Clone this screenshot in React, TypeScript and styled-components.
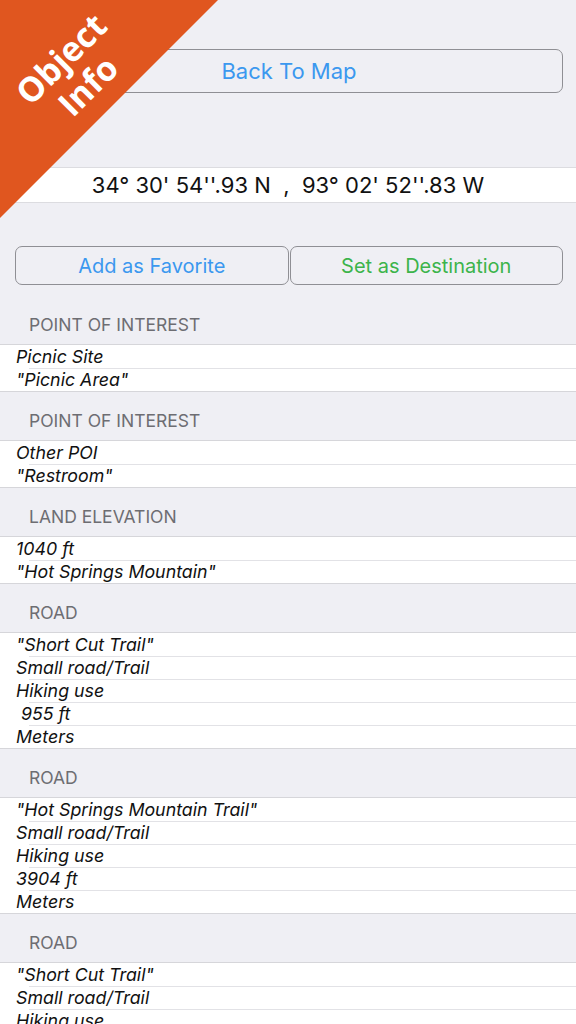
import React from 'react';
import styled, { createGlobalStyle } from 'styled-components';

const GlobalStyle = createGlobalStyle`
  html, body {
    margin: 0;
    padding: 0;
    background: #efeff4;
  }
  body {
    font-family: Inter, "Noto Sans", "Liberation Sans", sans-serif;
    -webkit-font-smoothing: antialiased;
  }
`;

const Screen = styled.div`
  position: relative;
  width: 576px;
  height: 1024px;
  background: #efeff4;
  overflow: hidden;
`;

const TopBar = styled.div`
  padding: 49px 13px 0 15px;
`;

const OutlineButton = styled.button<{ $tone?: 'blue' | 'green'; $h?: number }>`
  display: flex;
  align-items: center;
  justify-content: center;
  width: 100%;
  height: ${(p) => p.$h || 44}px;
  margin: 0;
  padding: 0;
  background: transparent;
  border: 1px solid #8f8f94;
  border-radius: 7px;
  font-family: inherit;
  font-size: ${(p) => (p.$h ? 20 : 22)}px;
  color: ${(p) => (p.$tone === 'green' ? '#3cb44b' : '#3b98ef')};
  cursor: pointer;
`;

const CoordRow = styled.div`
  margin-top: 74px;
  height: 34px;
  display: flex;
  align-items: center;
  justify-content: center;
  background: #fff;
  border-top: 1px solid #dcdce0;
  border-bottom: 1px solid #dcdce0;
  font-size: 22px;
  color: #111;
  white-space: pre;
`;

const ActionRow = styled.div`
  display: grid;
  grid-template-columns: 1fr 1fr;
  gap: 1px;
  padding: 43px 13px 10px 15px;
`;

const SectionHeader = styled.div`
  height: 50px;
  display: flex;
  align-items: flex-end;
  padding: 0 0 10px 29px;
  box-sizing: border-box;
  font-size: 17.5px;
  line-height: 20px;
  color: #6d6d72;
`;

const List = styled.div`
  background: #fff;
  box-shadow: 0 -1px 0 #d6d6da, 0 1px 0 #d6d6da;
`;

const Row = styled.div`
  position: relative;
  height: 23px;
  line-height: 23px;
  padding-left: 16px;
  font-size: 17.8px;
  font-style: italic;
  color: #111;
  white-space: pre;

  & + &::before {
    content: '';
    position: absolute;
    top: 0;
    left: 29px;
    right: 0;
    height: 1px;
    background: #e2e2e6;
  }
`;

const Ribbon = styled.div`
  position: absolute;
  top: 0;
  left: 0;
  width: 218px;
  height: 218px;
  background: #e0561f;
  clip-path: polygon(0 0, 100% 0, 0 100%);
  pointer-events: none;
`;

const RibbonText = styled.div`
  position: absolute;
  left: 74px;
  top: 72px;
  transform: translate(-50%, -50%) rotate(-45deg);
  font-family: "Open Sans", "DejaVu Sans", sans-serif;
  font-weight: 700;
  font-size: 34px;
  line-height: 38px;
  color: #fff;
  text-align: center;
  white-space: nowrap;
`;

const sections: { title: string; rows: string[] }[] = [
  { title: 'POINT OF INTEREST', rows: ['Picnic Site', '"Picnic Area"'] },
  { title: 'POINT OF INTEREST', rows: ['Other POI', '"Restroom"'] },
  { title: 'LAND ELEVATION', rows: ['1040 ft', '"Hot Springs Mountain"'] },
  {
    title: 'ROAD',
    rows: ['"Short Cut Trail"', 'Small road/Trail', 'Hiking use', ' 955 ft', 'Meters'],
  },
  {
    title: 'ROAD',
    rows: ['"Hot Springs Mountain Trail"', 'Small road/Trail', 'Hiking use', '3904 ft', 'Meters'],
  },
  {
    title: 'ROAD',
    rows: ['"Short Cut Trail"', 'Small road/Trail', 'Hiking use', ' 955 ft', 'Meters'],
  },
];

const App = () => {
  return (
    <>
      <GlobalStyle />
      <Screen>
        <TopBar>
          <OutlineButton>Back To Map</OutlineButton>
        </TopBar>
        <CoordRow>{"34° 30' 54''.93 N  ,  93° 02' 52''.83 W"}</CoordRow>
        <ActionRow>
          <OutlineButton $h={39}>Add as Favorite</OutlineButton>
          <OutlineButton $h={39} $tone="green">
            Set as Destination
          </OutlineButton>
        </ActionRow>
        {sections.map((s, i) => (
          <div key={i}>
            <SectionHeader>{s.title}</SectionHeader>
            <List>
              {s.rows.map((r, j) => (
                <Row key={j}>{r}</Row>
              ))}
            </List>
          </div>
        ))}
        <Ribbon>
          <RibbonText>
            Object
            <br />
            Info
          </RibbonText>
        </Ribbon>
      </Screen>
    </>
  );
};

export default App;
